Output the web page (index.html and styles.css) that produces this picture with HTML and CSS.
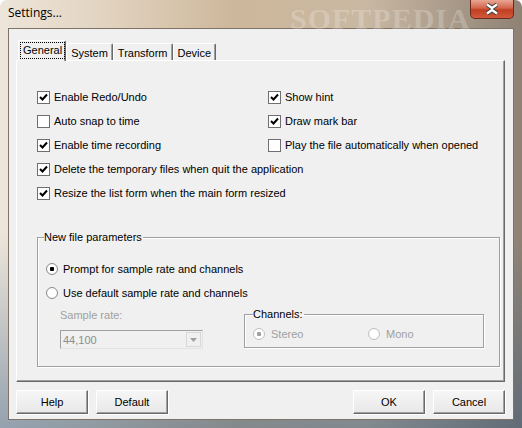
FILE: index.html
```html
<!DOCTYPE html>
<html lang="en">
<head>
  <meta charset="utf-8">
  <title>Settings...</title>
  <link rel="stylesheet" href="styles.css">
</head>
<body>
<div class="window">

  <div class="titlebar">
    <span class="title">Settings...</span>
    <span class="mark-title">SOFTPEDIA</span>
    <div class="close">
      <svg width="16" height="12" viewBox="0 0 16 12">
        <path d="M3 1.5 L8 5 L13 1.5 M3 10.5 L8 7 L13 10.5" stroke="#3a3a3a" stroke-width="4.2" fill="none"/>
        <path d="M3 1.5 L8 5 L13 1.5 M3 10.5 L8 7 L13 10.5" stroke="#ffffff" stroke-width="2.4" fill="none"/>
      </svg>
    </div>
  </div>

  <div class="client">

    <div class="tabs">
      <div class="tab active"><span class="focus">General</span></div>
      <div class="tab">System</div>
      <div class="tab">Transform</div>
      <div class="tab">Device</div>
    </div>

    <div class="panel">
      <div class="options">
        <label class="check"><span class="box on"></span>Enable Redo/Undo</label>
        <label class="check"><span class="box on"></span>Show hint</label>
        <label class="check"><span class="box"></span>Auto snap to time</label>
        <label class="check"><span class="box on"></span>Draw mark bar</label>
        <label class="check"><span class="box on"></span>Enable time recording</label>
        <label class="check"><span class="box"></span>Play the file automatically when opened</label>
        <label class="check wide"><span class="box on"></span>Delete the temporary files when quit the application</label>
        <label class="check wide"><span class="box on"></span>Resize the list form when the main form resized</label>
      </div>

      <fieldset class="group">
        <legend>New file parameters</legend>
        <label class="radio"><span class="dot on"></span>Prompt for sample rate and channels</label>
        <label class="radio"><span class="dot"></span>Use default sample rate and channels</label>

        <div class="defaults">
          <div class="rate">
            <span class="muted">Sample rate:</span>
            <div class="combo">
              <span>44,100</span>
              <span class="drop">
                <svg width="7" height="4" viewBox="0 0 7 4"><path d="M0 0 H7 L3.5 4 Z" fill="#a0a0a0"/></svg>
              </span>
            </div>
          </div>
          <fieldset class="group small">
            <legend>Channels:</legend>
            <label class="radio muted"><span class="dot on off"></span>Stereo</label>
            <label class="radio muted"><span class="dot off"></span>Mono</label>
          </fieldset>
        </div>
      </fieldset>
    </div>

    <div class="buttons">
      <button>Help</button>
      <button>Default</button>
      <span class="spacer"></span>
      <button>OK</button>
      <button>Cancel</button>
    </div>

  </div>
</div>
</body>
</html>
```

FILE: styles.css
```css
body {
  margin: 0;
  background: #ffffff;
  font-family: "Liberation Sans", Arial, sans-serif;
  font-size: 11px;
  color: #000000;
}

.window {
  width: 522px;
  height: 428px;
  display: flex;
  flex-direction: column;
  border-radius: 7px 7px 0 0;
  overflow: hidden;
  background:
    linear-gradient(to bottom, rgba(0,0,0,0) 55%, rgba(40,80,120,0.45) 100%),
    linear-gradient(to right, #ede5db 0%, #e2d3c0 20%, #cdb79b 45%, #c9b8a2 70%, #8f8275 100%);
}

.titlebar {
  position: relative;
  height: 28px;
  flex: none;
  display: flex;
  align-items: center;
  padding-left: 8px;
}
.title {
  font-family: "Open Sans", "Liberation Sans", sans-serif;
  font-size: 12px;
  margin-top: -3px;
}
.mark-title {
  position: absolute;
  left: 290px;
  top: 2px;
  font-family: "Liberation Serif", serif;
  font-weight: bold;
  font-size: 30px;
  letter-spacing: 1px;
  color: rgba(255,255,255,0.22);
}
.close {
  position: absolute;
  right: 8px;
  top: 0;
  width: 44px;
  height: 19px;
  box-sizing: border-box;
  border: 1px solid #6b2a1c;
  border-top: none;
  border-radius: 0 0 5px 5px;
  background: linear-gradient(to bottom, #e9a695 0%, #d2644a 45%, #c13f22 55%, #d2593a 100%);
  display: flex;
  align-items: center;
  justify-content: center;
}

.client {
  flex: 1;
  margin: 0 8px 8px 8px;
  background: #f0f0f0;
  border: 1px solid #7d7366;
  display: flex;
  flex-direction: column;
}

/* tabs */
.tabs {
  display: flex;
  align-items: flex-end;
  margin: 11px 0 0 9px;
  height: 20px;
  position: relative;
  z-index: 1;
}
.tab {
  height: 17px;
  box-sizing: border-box;
  padding: 3px 4px 0 4px;
  border-left: 1px solid #ffffff;
  border-top: 1px solid #ffffff;
  border-right: 1px solid #696969;
  box-shadow: inset -1px 0 0 #a0a0a0;
  border-radius: 2px 2px 0 0;
  background: #f0f0f0;
}
.tab.active {
  height: 21px;
  padding: 2px 1px 0 2px;
  margin-bottom: -1px;
}
.focus {
  display: inline-block;
  outline: 1px dotted #000000;
  padding: 1px 2px 2px 2px;
}

/* page */
.panel {
  margin: 0 0 0 7px;
  width: 489px;
  height: 322px;
  box-sizing: border-box;
  border-left: 1px solid #ffffff;
  border-top: 1px solid #ffffff;
  border-right: 1px solid #696969;
  border-bottom: 1px solid #696969;
  box-shadow: inset -1px -1px 0 #a0a0a0;
  padding: 24px 0 0 20px;
}

.options {
  display: grid;
  grid-template-columns: 231px 1fr;
  grid-auto-rows: 24px;
}
.check {
  display: flex;
  align-items: center;
  white-space: nowrap;
}
.check.wide {
  grid-column: 1 / 3;
}
.box {
  width: 13px;
  height: 13px;
  box-sizing: border-box;
  border: 1px solid #6f6f6f;
  background: #ffffff;
  margin-right: 4px;
  flex: none;
}
.box.on {
  background: #ffffff url("data:image/svg+xml,%3Csvg xmlns='http://www.w3.org/2000/svg' width='11' height='11'%3E%3Cpath d='M2 5 L4.5 7.5 L9 2.5' stroke='%23000' stroke-width='2' fill='none'/%3E%3C/svg%3E") no-repeat center;
}

/* group boxes */
.group {
  margin: 26px 0 0 0;
  width: 463px;
  height: 136px;
  box-sizing: border-box;
  border: 1px solid #a0a0a0;
  box-shadow: 1px 1px 0 #ffffff, inset 1px 1px 0 #ffffff;
  padding: 14px 0 0 8px;
}
.group legend {
  padding: 0 1px 0 0;
  margin-left: -2px;
  line-height: 12px;
}
.radio {
  display: flex;
  align-items: center;
  height: 24px;
  white-space: nowrap;
}
.dot {
  width: 12px;
  height: 12px;
  box-sizing: border-box;
  border-radius: 50%;
  border: 1px solid #8a8a8a;
  background: radial-gradient(circle, #ffffff 60%, #e4e4e4 100%);
  margin-right: 5px;
  flex: none;
}
.dot.on {
  background: radial-gradient(circle, #000000 0 2px, #ffffff 2.5px 60%, #e4e4e4 100%);
}
.dot.off {
  border-color: #c0c0c0;
}
.dot.on.off {
  background: radial-gradient(circle, #a0a0a0 0 2px, #ffffff 2.5px);
}
.muted {
  color: #a0a0a0;
}

.defaults {
  display: flex;
  align-items: flex-start;
  margin-top: 4px;
}
.rate {
  display: flex;
  flex-direction: column;
  gap: 9px;
  padding-left: 14px;
  width: 184px;
}
.combo {
  width: 143px;
  height: 19px;
  box-sizing: border-box;
  border: 1px solid #a0a0a0;
  border-right-color: #e3e3e3;
  border-bottom-color: #e3e3e3;
  background: #f0f0f0;
  color: #8d8d8d;
  display: flex;
  align-items: center;
  justify-content: space-between;
  padding-left: 2px;
}
.drop {
  width: 15px;
  height: 15px;
  box-sizing: border-box;
  border: 1px solid #d8d8d8;
  display: flex;
  align-items: center;
  justify-content: center;
  margin-right: 1px;
}
.group.small {
  margin: -1px 0 0 0;
  width: 240px;
  height: 40px;
  padding: 0 0 0 8px;
  display: flex;
}
.group.small legend {
  margin-left: 0;
}
.group.small .radio {
  height: 20px;
  margin-top: 4px;
  width: 115px;
}
.group.small .dot {
  margin-right: 6px;
}

/* dialog buttons */
.buttons {
  display: flex;
  gap: 8px;
  margin: 8px 0 0 7px;
  width: 489px;
}
.spacer {
  flex: 1;
}
button {
  width: 72px;
  height: 24px;
  font-family: "Liberation Sans", Arial, sans-serif;
  font-size: 11px;
  color: #000000;
  background: linear-gradient(to bottom, #f6f6f6, #e8e8e8);
  border: 1px solid;
  border-color: #ffffff #696969 #696969 #ffffff;
  box-shadow: inset -1px -1px 0 #a0a0a0, 1px 1px 0 #ffffff;
  padding: 0;
}
```
